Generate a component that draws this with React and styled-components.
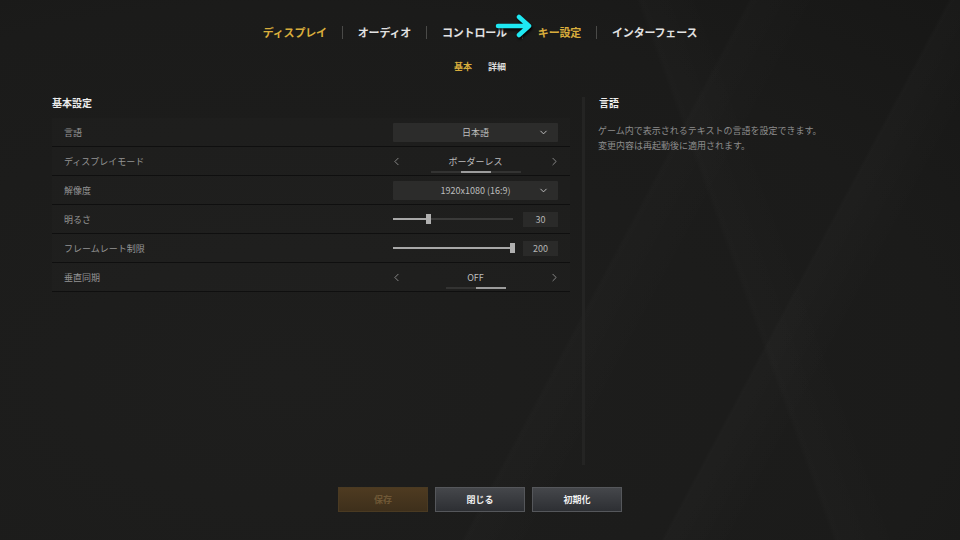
import React from 'react';
import styled, { createGlobalStyle } from 'styled-components';
import { ChevronDown, ChevronLeft, ChevronRight } from 'lucide-react';

const GlobalStyle = createGlobalStyle`
  html, body {
    margin: 0;
    padding: 0;
    background: #1b1b1a;
  }
  * {
    box-sizing: border-box;
  }
`;

const Screen = styled.div`
  position: relative;
  width: 960px;
  height: 540px;
  overflow: hidden;
  display: flex;
  flex-direction: column;
  font-family: 'Noto Sans CJK JP', 'Noto Sans', sans-serif;
  color: #ddd;
  background:
    linear-gradient(118deg, transparent 60%, rgba(255, 255, 255, 0.012) 60.3%, transparent 66%),
    linear-gradient(118deg, transparent 76%, rgba(255, 255, 255, 0.014) 76.3%, transparent 82%),
    linear-gradient(70deg, transparent 72%, rgba(255, 255, 255, 0.01) 72.4%, transparent 78%),
    radial-gradient(ellipse at 30% 70%, #1e1e1d 0%, #1b1b1a 70%, #171716 100%);
`;

const TopNav = styled.nav`
  display: flex;
  justify-content: center;
  align-items: center;
  padding-top: 24px;
  height: 40px;
`;

const Tab = styled.div`
  position: relative;
  font-size: 11px;
  letter-spacing: -0.2px;
  line-height: 16px;
  font-weight: 700;
  color: ${(p) => (p.active ? '#d9ad3c' : '#e2e2e2')};
`;

const Divider = styled.span`
  width: 1px;
  height: 13px;
  margin: 0 15px;
  background: #4a4a48;
`;

const PointerArrow = styled.svg`
  position: absolute;
  left: -43px;
  top: -10px;
  width: 38px;
  height: 24px;
  filter: drop-shadow(1px 2px 1px rgba(0, 0, 0, 0.85));
`;

const SubNav = styled.div`
  display: flex;
  justify-content: center;
  gap: 16px;
  margin-top: 21px;
  line-height: 12px;
  font-size: 9px;
  font-weight: 700;
`;

const SubTab = styled.span`
  color: ${(p) => (p.active ? '#d9ad3c' : '#dcdcdc')};
`;

const Body = styled.main`
  flex: 1;
  display: flex;
  margin-top: 24px;
  padding-left: 52px;
`;

const LeftColumn = styled.section`
  width: 518px;
  display: flex;
  flex-direction: column;
`;

const SectionTitle = styled.h3`
  margin: 0 0 9px;
  font-size: 10px;
  line-height: 12px;
  font-weight: 700;
  color: #ececec;
`;

const Row = styled.div`
  display: flex;
  align-items: center;
  justify-content: space-between;
  height: 29px;
  padding: 0 12px;
  background: rgba(255, 255, 255, 0.012);
  border-bottom: 1px solid #0f0f0f;
`;

const Label = styled.span`
  font-size: 9px;
  color: #949494;
`;

const Control = styled.div`
  width: 165px;
  display: flex;
  align-items: center;
`;

const Dropdown = styled.div`
  position: relative;
  width: 100%;
  height: 19px;
  display: flex;
  align-items: center;
  justify-content: center;
  background: #2c2c2b;
  border-radius: 1px;
  font-size: 9px;
  color: #bdbdbd;

  svg {
    position: absolute;
    right: 9px;
    top: 4px;
  }
`;

const Selector = styled.div`
  width: 100%;
  display: flex;
  align-items: center;
  justify-content: space-between;
  color: #b0b0b0;

  & > svg {
    margin: 0 -3px;
  }
`;

const SelectorValue = styled.div`
  display: flex;
  flex-direction: column;
  align-items: center;
  gap: 3px;
  padding-top: 6px;
  font-size: 9px;
  color: #bdbdbd;
`;

const Steps = styled.div`
  display: flex;
  width: ${(p) => p.count * 30}px;
  height: 2px;
`;

const Step = styled.span`
  flex: 1;
  background: ${(p) => (p.on ? '#9c9c9c' : '#333332')};
`;

const SliderTrack = styled.div`
  position: relative;
  width: 120px;
  height: 2px;
  background: #3a3a39;
`;

const SliderFill = styled.div`
  height: 100%;
  background: #a8a8a8;
`;

const SliderThumb = styled.span`
  position: absolute;
  top: -4px;
  width: 5px;
  height: 10px;
  margin-left: -3px;
  background: #b0b0b0;
`;

const ValueBox = styled.div`
  width: 35px;
  height: 15px;
  margin-left: auto;
  display: flex;
  align-items: center;
  justify-content: center;
  background: #2a2a29;
  font-size: 9px;
  color: #b4b4b4;
`;

const ScrollRail = styled.div`
  width: 3px;
  margin: 0 14px 0 12px;
  background: #242423;
`;

const InfoColumn = styled.aside`
  width: 260px;
`;

const InfoText = styled.p`
  margin: 14px 0 0 -1px;
  font-size: 9px;
  line-height: 15px;
  color: #8c8c8c;
`;

const Footer = styled.footer`
  display: flex;
  justify-content: center;
  gap: 7px;
  padding: 22px 0 28px;
`;

const Button = styled.button`
  width: 90px;
  height: 25px;
  font-family: inherit;
  font-size: 9px;
  font-weight: 700;
  border: 1px solid ${(p) => (p.primary ? '#4a3a22' : '#55575b')};
  background: ${(p) =>
    p.primary
      ? 'linear-gradient(#4e3b21, #3e2f1b)'
      : 'linear-gradient(#45474b, #2d2f33)'};
  color: ${(p) => (p.primary ? '#6f5836' : '#f0f0f0')};
`;

const ArrowStepper = ({ value, count, index }) => (
  <Selector>
    <ChevronLeft size={13} strokeWidth={1.3} />
    <SelectorValue>
      {value}
      <Steps count={count}>
        {Array.from({ length: count }).map((_, i) => (
          <Step key={i} on={i === index} />
        ))}
      </Steps>
    </SelectorValue>
    <ChevronRight size={13} strokeWidth={1.3} />
  </Selector>
);

const Slider = ({ value, percent }) => (
  <>
    <SliderTrack>
      <SliderFill style={{ width: `${percent}%` }} />
      <SliderThumb style={{ left: `${percent}%` }} />
    </SliderTrack>
    <ValueBox>{value}</ValueBox>
  </>
);

const settings = [
  { label: '言語', kind: 'dropdown', value: '日本語' },
  { label: 'ディスプレイモード', kind: 'stepper', value: 'ボーダーレス', count: 3, index: 1 },
  { label: '解像度', kind: 'dropdown', value: '1920x1080 (16:9)' },
  { label: '明るさ', kind: 'slider', value: 30, percent: 30 },
  { label: 'フレームレート制限', kind: 'slider', value: 200, percent: 100 },
  { label: '垂直同期', kind: 'stepper', value: 'OFF', count: 2, index: 1 },
];

const tabs = ['ディスプレイ', 'オーディオ', 'コントロール', 'キー設定', 'インターフェース'];

export default function App() {
  return (
    <Screen>
      <GlobalStyle />
      <TopNav>
        {tabs.map((t, i) => (
          <React.Fragment key={t}>
            {i > 0 && <Divider />}
            <Tab active={i === 0 || i === 3}>
              {t}
              {i === 3 && (
                <PointerArrow viewBox="0 0 38 24">
                  <path
                    d="M3 12 H33 M24 3 L34 12 L24 21"
                    fill="none"
                    stroke="#1ee8f2"
                    strokeWidth="4.5"
                    strokeLinecap="round"
                    strokeLinejoin="round"
                  />
                </PointerArrow>
              )}
            </Tab>
          </React.Fragment>
        ))}
      </TopNav>

      <SubNav>
        <SubTab active>基本</SubTab>
        <SubTab>詳細</SubTab>
      </SubNav>

      <Body>
        <LeftColumn>
          <SectionTitle>基本設定</SectionTitle>
          {settings.map((s) => (
            <Row key={s.label}>
              <Label>{s.label}</Label>
              <Control>
                {s.kind === 'dropdown' && (
                  <Dropdown>
                    {s.value}
                    <ChevronDown size={11} strokeWidth={2} color="#c8c8c8" />
                  </Dropdown>
                )}
                {s.kind === 'stepper' && (
                  <ArrowStepper value={s.value} count={s.count} index={s.index} />
                )}
                {s.kind === 'slider' && <Slider value={s.value} percent={s.percent} />}
              </Control>
            </Row>
          ))}
        </LeftColumn>
        <ScrollRail />
        <InfoColumn>
          <SectionTitle>言語</SectionTitle>
          <InfoText>
            ゲーム内で表示されるテキストの言語を設定できます。
            <br />
            変更内容は再起動後に適用されます。
          </InfoText>
        </InfoColumn>
      </Body>

      <Footer>
        <Button primary>保存</Button>
        <Button>閉じる</Button>
        <Button>初期化</Button>
      </Footer>
    </Screen>
  );
}
